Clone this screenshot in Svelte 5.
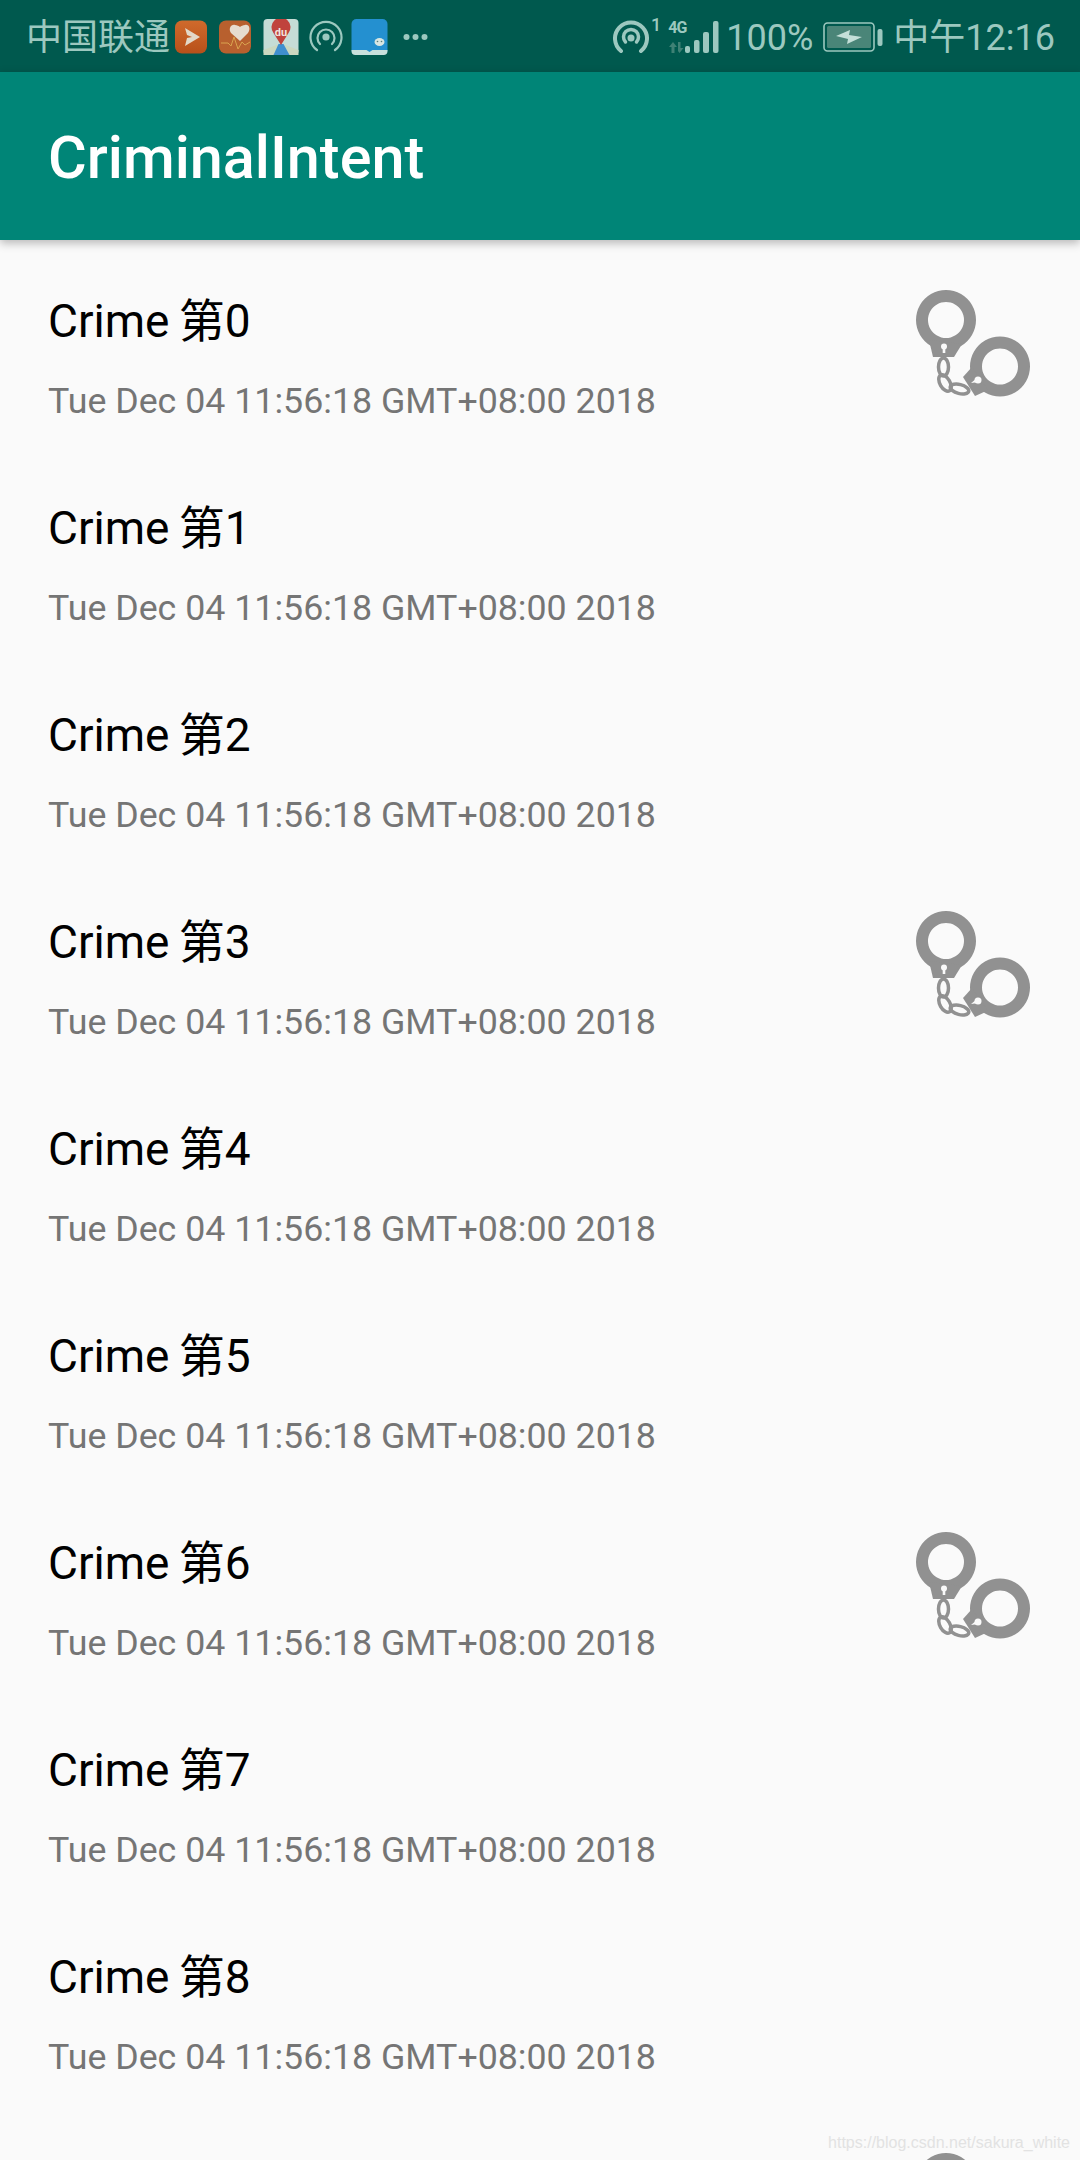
<script>
  const rows = Array.from({ length: 10 }, (_, i) => ({ id: i, solved: i % 3 === 0 }));
</script>

<div class="page">
  <div class="status">
    <span class="carrier">中国联通</span>
    <svg class="notif" width="32" height="34" viewBox="0 0 32 34">
      <defs><linearGradient id="o1" x1="0" y1="0" x2="0" y2="1"><stop offset="0" stop-color="#cf6a2c"/><stop offset="1" stop-color="#b8501a"/></linearGradient></defs>
      <rect x="0" y="0.5" width="32" height="33" rx="7" fill="url(#o1)"/>
      <path d="M10 8 L25 17 L10 26 L12 18 L17 17 L12 15 Z" fill="#e3d8c8"/>
    </svg>
    <svg class="notif n2" width="32" height="34" viewBox="0 0 32 34">
      <rect x="0" y="0.5" width="32" height="33" rx="7" fill="#b8602e"/>
      <path d="M21 21 L12 13 C9 9 12 4 16 5 C18 5 20 6 21 7 C22 6 24 5 26 5 C30 4 32 9 29 13 Z" fill="#e6dcce"/>
      <path d="M2 23 H9 L12 26 L15 17 L19 29 L23 22 L26 25 L31 22" fill="none" stroke="#d9a24e" stroke-width="1"/>
    </svg>
    <svg class="notif n3" width="36" height="36" viewBox="0 0 35 36">
      <rect width="35" height="36" rx="4" fill="#c5dcd6"/>
      <path d="M0 36 L0 31 L13 26 H22 L35 31 V36 Z" fill="#cbd8c0"/>
      <path d="M10 36 L15 25 H20 L26 36 Z" fill="#3f8fcf"/>
      <path d="M17.5 26 L10 14 A9.5 9.5 0 1 1 25 14 Z" fill="#c0433c"/>
      <text x="17.5" y="17" class="du">du</text>
    </svg>
    <svg class="notif n4" width="34" height="34" viewBox="0 0 34 34" fill="none" stroke="#9cc8bf" stroke-width="2.2" stroke-linecap="round">
      <path d="M8 30 A15.5 15.5 0 1 1 26 30"/>
      <path d="M11 24 A8.5 8.5 0 1 1 23 24"/>
      <circle cx="17" cy="17" r="3.6" fill="#9cc8bf" stroke="none"/>
    </svg>
    <svg class="notif n5" width="37" height="36" viewBox="0 0 36 36">
      <rect width="36" height="36" rx="5" fill="#2490d0"/>
      <path d="M0 31 H15 L18 33 L21 31 H36 V32 A4 4 0 0 1 32 36 H4 A4 4 0 0 1 0 32 Z" fill="#c8e0dc"/>
      <ellipse cx="28" cy="23" rx="5" ry="4" fill="#d8e6e2"/>
      <circle cx="26" cy="22.500" r="0.800" fill="#5a7d78"/>
      <circle cx="30" cy="22.500" r="0.800" fill="#5a7d78"/>
    </svg>
    <svg class="notif n6" width="27" height="8" viewBox="0 0 26 8" fill="#9cc8bf">
      <circle cx="4" cy="4" r="3"/><circle cx="13" cy="4" r="3"/><circle cx="22" cy="4" r="3"/>
    </svg>

    <div class="status-right">
      <svg width="36" height="34" viewBox="0 0 36 34" fill="none" stroke="#9cc8bf" stroke-width="4" stroke-linecap="round">
        <path d="M8 31 A16 16 0 1 1 28 31"/>
        <path d="M12.500 22 A7.500 7.500 0 1 1 23.500 22" stroke-width="3.500"/>
        <circle cx="18" cy="18" r="3.500" fill="#9cc8bf" stroke="none"/>
      </svg>
      <span class="sim">1</span>
      <div class="net">
        <span class="g4">4G</span>
        <svg width="16" height="11" viewBox="0 0 16 11" fill="#3f8175"><path d="M5 0 L9 5 H6.500 V11 H3.500 V5 H1 Z"/><path d="M10 0 H12.500 V6 H15.500 L11.500 11 L10 9 Z"/></svg>
      </div>
      <svg class="bars" width="34" height="34" viewBox="0 0 34 34" fill="#9cc8bf">
        <rect x="0" y="26" width="5" height="7" rx="2"/>
        <rect x="9" y="20" width="5.500" height="13" rx="2"/>
        <rect x="18" y="12" width="6" height="21" rx="2"/>
        <rect x="28" y="1" width="5.500" height="32" rx="2"/>
      </svg>
      <span class="stat pct">100%</span>
      <svg class="batt" width="60" height="30" viewBox="0 0 60 30">
        <rect x="1" y="1" width="50" height="28" rx="3.500" fill="none" stroke="#9cc8bf" stroke-width="1.600"/>
        <rect x="4" y="4" width="44" height="22" rx="1.500" fill="#4a8578"/>
        <rect x="54.500" y="7" width="5" height="17" rx="2" fill="#9cc8bf"/>
        <path d="M13 14 L27 8 L26 13 L39 15 L24 22 L25 17 Z" fill="#c4dfd8"/>
      </svg>
      <span class="stat clock">中午12:16</span>
    </div>
  </div>

  <header class="bar"><h1>CriminalIntent</h1></header>

  <main class="list">
    {#each rows as row (row.id)}
      <div class="row">
        {#if row.id < 9}
          <div class="copy">
            <div class="title">Crime 第{row.id}</div>
            <div class="date">Tue Dec 04 11:56:18 GMT+08:00 2018</div>
          </div>
        {/if}
        {#if row.solved}
          <svg class="cuffs" width="160" height="140" viewBox="0 0 160 140">
            <g fill="#919191">
              <path fill-rule="evenodd" d="M56 20 a30 30 0 1 0 0.010 0 Z M56 32 a18 18 0 1 1 -0.010 0 Z"/>
              <path fill-rule="evenodd" d="M110 66.500 a30 30 0 1 0 0.010 0 Z M110 78.500 a18 18 0 1 1 -0.010 0 Z"/>
              <path d="M39 70 L43 87 L64 87 L72 74 Z"/>
              <path d="M82 97 L73 107 L85 126 L98 120 Z"/>
            </g>
            <g fill="#fafafa">
              <circle cx="54" cy="76.500" r="3"/>
              <rect x="52.700" y="77" width="2.600" height="6"/>
              <circle cx="88" cy="110" r="3.500"/>
              <path d="M81 113 L87 108 L89 112 Z"/>
            </g>
            <g fill="none" stroke="#919191" stroke-width="3.500">
              <ellipse cx="53.500" cy="97" rx="5" ry="9"/>
              <ellipse cx="55" cy="113" rx="5" ry="9" transform="rotate(-30 55 113)"/>
              <ellipse cx="69.500" cy="119" rx="9.500" ry="4.500" transform="rotate(14 69.500 119)"/>
            </g>
          </svg>
        {/if}
      </div>
    {/each}
  </main>

  <div class="mark">https://blog.csdn.net/sakura_white</div>
</div>

<style>
  :global(body) { margin: 0; background: #fafafa; }

  .page {
    position: relative;
    width: 1080px;
    height: 2160px;
    overflow: hidden;
    background: #fafafa;
    font-family: Roboto, "Noto Sans CJK SC", sans-serif;
  }

  .status {
    display: flex;
    align-items: center;
    height: 72px;
    padding: 1px 25px 0 26px;
    box-sizing: border-box;
    background: #00594e;
    color: #9cc8bf;
  }
  .carrier { font-size: 36px; line-height: 44px; margin-top: 2px; width: 149px; flex: none; }
  .notif { flex: none; }
  .n2 { margin-left: 12px; }
  .n3 { margin-left: 12px; }
  .n4 { margin-left: 10px; }
  .n5 { margin-left: 8px; }
  .n6 { margin-left: 14px; }
  .du { font: 700 11px Roboto, sans-serif; fill: #f1e4dc; text-anchor: middle; }

  .status-right { display: flex; align-items: center; margin-left: auto; }
  .sim { font-size: 18px; font-weight: 500; margin: -24px 7px 0 2px; }
  .net { display: flex; flex-direction: column; align-items: flex-start; gap: 7px; width: 17px; }
  .g4 { font: 700 16px/14px "Roboto", sans-serif; letter-spacing: -1px; }
  .stat { font-size: 36px; line-height: 44px; margin-top: 2px; }
  .pct { margin-left: 7px; }
  .batt { margin: 0 10px 0 10px; }

  .bar {
    position: relative;
    z-index: 1;
    display: flex;
    align-items: center;
    height: 168px;
    padding-left: 48px;
    background: #008577;
    box-shadow: 0 3px 9px rgba(0, 0, 0, 0.28);
  }
  h1 { margin: 5px 0 0; font-size: 59.4px; font-weight: 500; color: #fff; line-height: 1; }

  .row {
    display: flex;
    justify-content: space-between;
    align-items: flex-start;
    height: 207px;
    padding: 30px 30px 0 48px;
    box-sizing: border-box;
  }
  .copy { margin-top: 23px; }
  .title { font-size: 46px; line-height: 56px; word-spacing: -2px; color: #000; }
  .date { margin-top: 31px; font-size: 35.75px; line-height: 42px; color: #757575; }
  .cuffs { flex: none; margin-left: auto; }

  .mark {
    position: absolute;
    right: 10px;
    bottom: 7px;
    font: 16px/20px "Liberation Sans", sans-serif;
    color: #e2e2e2;
  }
</style>
